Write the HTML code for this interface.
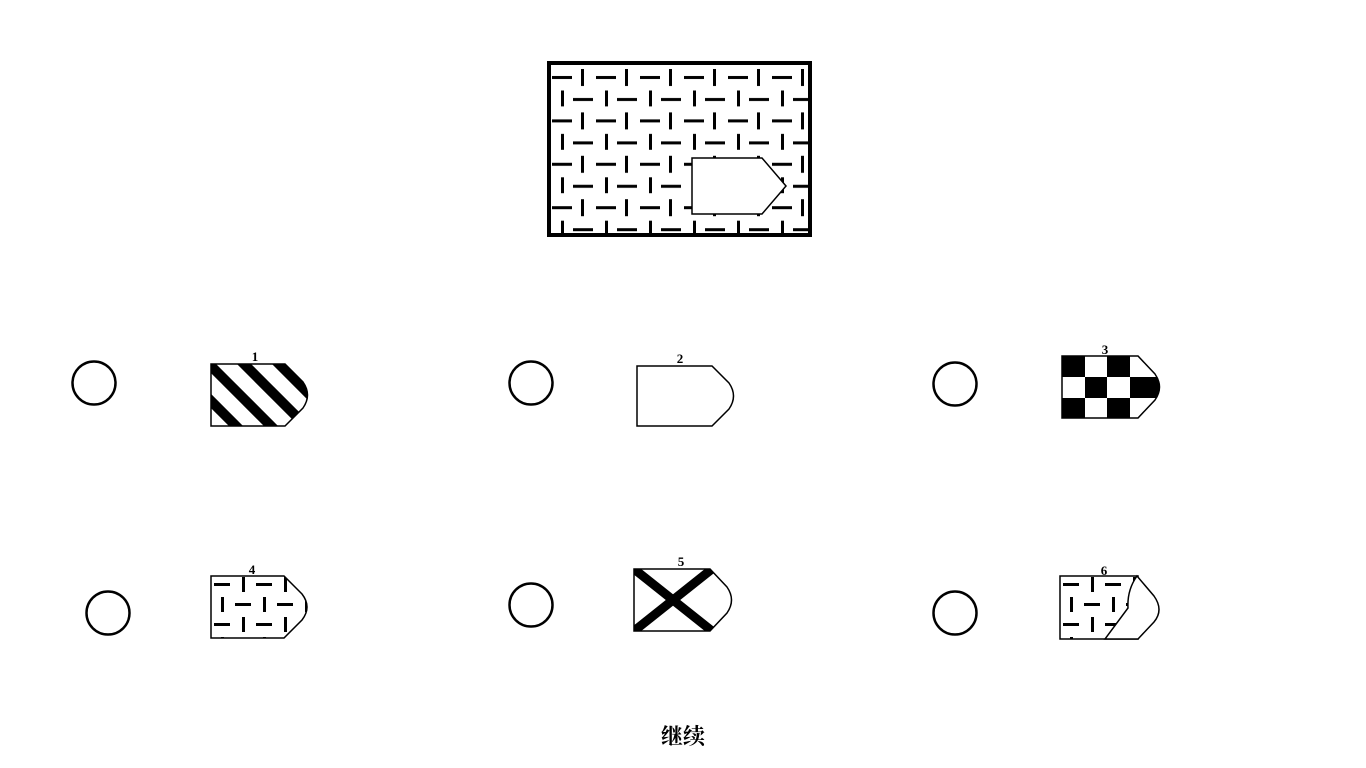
<!DOCTYPE html>
<html><head><meta charset="utf-8"><style>
html,body{margin:0;padding:0;background:#fff;width:1366px;height:768px;overflow:hidden}
svg{display:block}
text{font-family:"Liberation Serif","Noto Serif CJK SC",serif}
</style></head><body>
<svg width="1366" height="768" viewBox="0 0 1366 768" xmlns="http://www.w3.org/2000/svg">
<defs>
<pattern id="dash" x="549" y="63" width="44" height="43.4" patternUnits="userSpaceOnUse">
<rect width="44" height="43.4" fill="#fff"/>
<rect x="3" y="13" width="20" height="3" fill="#000"/>
<rect x="32" y="6" width="3" height="17" fill="#000"/>
<rect x="24" y="35" width="20" height="3" fill="#000"/>
<rect x="12" y="27.5" width="3" height="17" fill="#000"/>
</pattern>
<pattern id="dash2" x="211" y="576" width="42" height="40" patternUnits="userSpaceOnUse">
<rect width="42" height="40" fill="#fff"/>
<rect x="3" y="7" width="16" height="3" fill="#000"/>
<rect x="31" y="1" width="3" height="15" fill="#000"/>
<rect x="24" y="27" width="16" height="3" fill="#000"/>
<rect x="10" y="21" width="3" height="15" fill="#000"/>
</pattern>
<pattern id="dash3" x="1060" y="576" width="42" height="40" patternUnits="userSpaceOnUse">
<rect width="42" height="40" fill="#fff"/>
<rect x="3" y="7" width="16" height="3" fill="#000"/>
<rect x="31" y="1" width="3" height="15" fill="#000"/>
<rect x="24" y="27" width="16" height="3" fill="#000"/>
<rect x="10" y="21" width="3" height="15" fill="#000"/>
</pattern>
<clipPath id="c1"><path d="M211 364 H285 L303 382 Q312 395 303 408 L285 426 H211Z"/></clipPath>
<clipPath id="c3"><path d="M1062 356 H1138 L1155 374 Q1164 387 1155 400 L1138 418 H1062Z"/></clipPath>
<clipPath id="c5"><path d="M634 569 H710 L727 587 Q736 600 727 613 L710 631 H634Z"/></clipPath>
</defs>

<rect x="549" y="63" width="261" height="172" fill="url(#dash)" stroke="#000" stroke-width="4"/>
<path d="M692 158 H762 L786 186 L762 214 H692Z" fill="#fff" stroke="#000" stroke-width="1.5"/>

<g fill="none" stroke="#000" stroke-width="2.5">
<circle cx="94" cy="383" r="21.5"/>
<circle cx="531" cy="383" r="21.5"/>
<circle cx="955" cy="384" r="21.5"/>
<circle cx="108" cy="613" r="21.5"/>
<circle cx="531" cy="605" r="21.5"/>
<circle cx="955" cy="613" r="21.5"/>
</g>

<g font-size="13" font-weight="bold" text-anchor="middle">
<text x="255" y="361">1</text>
<text x="680" y="363">2</text>
<text x="1105" y="354">3</text>
<text x="252" y="574">4</text>
<text x="681" y="566">5</text>
<text x="1104" y="575">6</text>
</g>

<g clip-path="url(#c1)">
<rect x="200" y="360" width="120" height="70" fill="#fff"/>
<g stroke="#000" stroke-width="10">
<line x1="150" y1="340" x2="250" y2="440"/>
<line x1="185" y1="340" x2="285" y2="440"/>
<line x1="220" y1="340" x2="320" y2="440"/>
<line x1="255" y1="340" x2="355" y2="440"/>
</g>
</g>
<path d="M211 364 H285 L303 382 Q312 395 303 408 L285 426 H211Z" fill="none" stroke="#000" stroke-width="1.5"/>

<path d="M637 366 H712 L729 383 Q738 396 729 409 L712 426 H637Z" fill="#fff" stroke="#000" stroke-width="1.5"/>

<g clip-path="url(#c3)">
<rect x="1060" y="354" width="110" height="70" fill="#fff"/>
<g fill="#000">
<rect x="1062" y="356" width="23" height="21"/>
<rect x="1107" y="356" width="23" height="21"/>
<rect x="1085" y="377" width="22" height="21"/>
<rect x="1130" y="377" width="30" height="21"/>
<rect x="1062" y="398" width="23" height="20"/>
<rect x="1107" y="398" width="23" height="20"/>
</g>
</g>
<path d="M1062 356 H1138 L1155 374 Q1164 387 1155 400 L1138 418 H1062Z" fill="none" stroke="#000" stroke-width="1.5"/>

<path d="M211 576 H284 L302 594 Q312 607 302 620 L284 638 H211Z" fill="url(#dash2)" stroke="#000" stroke-width="1.5"/>

<g clip-path="url(#c5)">
<rect x="630" y="565" width="110" height="70" fill="#fff"/>
<g stroke="#000" stroke-width="9">
<line x1="634" y1="569" x2="712" y2="631"/>
<line x1="712" y1="569" x2="634" y2="631"/>
</g>
</g>
<path d="M634 569 H710 L727 587 Q736 600 727 613 L710 631 H634Z" fill="none" stroke="#000" stroke-width="1.5"/>

<rect x="1060" y="576" width="78" height="63" fill="url(#dash3)" stroke="#000" stroke-width="1.5"/>
<path d="M1137 576 L1154 596 Q1164 610 1154 622 L1138 639 H1105 L1128 608 Q1127 590 1137 576Z" fill="#fff" stroke="#000" stroke-width="1.5"/>

<text x="683" y="744" font-size="22" font-weight="bold" text-anchor="middle">继续</text>
</svg>
</body></html>
